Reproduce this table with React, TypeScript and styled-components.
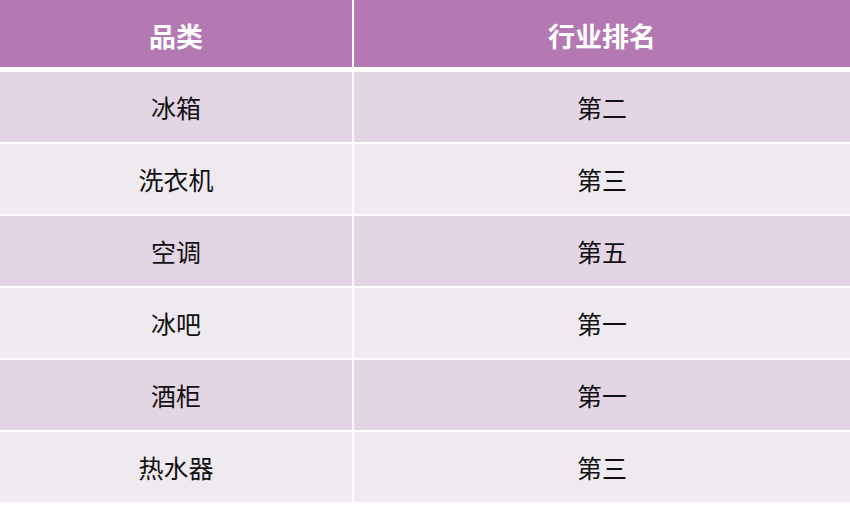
import React from "react";
import styled, { createGlobalStyle } from "styled-components";

const Global = createGlobalStyle`
  html, body { margin: 0; padding: 0; background: #ffffff; }
  body { width: 850px; height: 510px; overflow: hidden; font-family: "Noto Sans CJK SC", "Noto Sans", sans-serif; }
`;

const Table = styled.div`
  display: flex;
  flex-direction: column;
  width: 850px;
  background: #ffffff;
`;

const Row = styled.div<{ $head?: boolean }>`
  display: grid;
  grid-template-columns: 352px 1fr;
  column-gap: 2px;
  height: ${(p) => (p.$head ? 67 : 70)}px;
  margin-bottom: ${(p) => (p.$head ? 5 : 2)}px;
`;

const Cell = styled.div<{ $variant: "head" | "odd" | "even" }>`
  display: flex;
  align-items: center;
  justify-content: center;
  padding-top: ${(p) => (p.$variant === "head" ? 3 : 1)}px;
  box-sizing: border-box;
  background: ${(p) =>
    p.$variant === "head" ? "#b478b2" : p.$variant === "odd" ? "#e4d5e4" : "#efe9f0"};
  color: ${(p) => (p.$variant === "head" ? "#ffffff" : "#111111")};
  font-size: ${(p) => (p.$variant === "head" ? 27 : 25)}px;
  font-weight: ${(p) => (p.$variant === "head" ? 700 : 400)};
  line-height: 1;
`;

const rows: [string, string][] = [
  ["冰箱", "第二"],
  ["洗衣机", "第三"],
  ["空调", "第五"],
  ["冰吧", "第一"],
  ["酒柜", "第一"],
  ["热水器", "第三"],
];

export default function App() {
  return (
    <>
      <Global />
      <Table>
        <Row $head>
          <Cell $variant="head">品类</Cell>
          <Cell $variant="head">行业排名</Cell>
        </Row>
        {rows.map(([a, b], i) => (
          <Row key={i}>
            <Cell $variant={i % 2 === 0 ? "odd" : "even"}>{a}</Cell>
            <Cell $variant={i % 2 === 0 ? "odd" : "even"}>{b}</Cell>
          </Row>
        ))}
      </Table>
    </>
  );
}
